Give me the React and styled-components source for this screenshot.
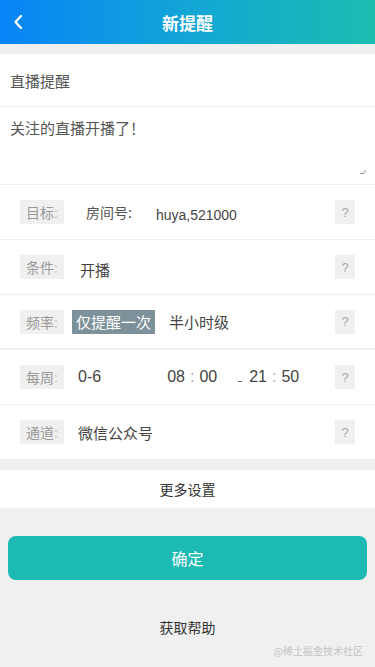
import React from "react";
import styled, { createGlobalStyle } from "styled-components";

const GlobalStyle = createGlobalStyle`
  html, body {
    margin: 0;
    padding: 0;
    background: #f0f0f0;
    font-family: "Noto Sans CJK SC", "Liberation Sans", Arial, sans-serif;
  }
`;

const Page = styled.div`
  width: 375px;
  min-height: 667px;
  background: #f0f0f0;
  position: relative;
`;

const Header = styled.div`
  height: 44px;
  display: flex;
  align-items: center;
  justify-content: center;
  position: relative;
  background: linear-gradient(90deg, #0784f7 0%, #13a6d6 50%, #1cbcb0 100%);
  color: #fff;
`;

const Back = styled.div`
  position: absolute;
  left: 12px;
  top: 13px;
  width: 14px;
  height: 18px;
  display: flex;
`;

const Title = styled.h1`
  margin: 0;
  font-size: 17px;
  font-weight: bold;
`;

const Section = styled.div`
  background: #fff;
  margin-top: ${(p) => p.$gap || 0}px;
`;

const NameRow = styled.div`
  height: 52px;
  display: flex;
  align-items: center;
  padding: 0 10px;
  font-size: 15px;
  color: #555;
  border-bottom: 1px solid #eee;
`;

const TextArea = styled.div`
  height: 78px;
  padding: 10px;
  box-sizing: border-box;
  font-size: 15px;
  color: #555;
  position: relative;
  border-bottom: 1px solid #eee;
`;

const Resize = styled.span`
  position: absolute;
  right: 10px;
  bottom: 10px;
  width: 3px;
  height: 3px;
  border-right: 1px solid #999;
  border-bottom: 1px solid #999;
  transform: skewX(-30deg);
`;

const Row = styled.div`
  height: ${(p) => (p.$thick ? 53 : 54)}px;
  display: flex;
  align-items: center;
  padding: 0 20px;
  border-bottom: ${(p) => (p.$thick ? 2 : 1)}px solid #eee;
  font-size: 15px;
  color: #444;
  &:last-child {
    border-bottom: none;
  }
`;

const Label = styled.span`
  width: 44px;
  height: 24px;
  background: #f0f0f0;
  color: #999;
  font-size: 14px;
  display: flex;
  align-items: center;
  justify-content: center;
  flex-shrink: 0;
  span {
    color: #ccc;
  }
`;

const Value = styled.span`
  margin-left: ${(p) => p.$ml || 0}px;
  margin-top: ${(p) => p.$mt || 0}px;
  font-size: ${(p) => p.$size || 15}px;
  color: ${(p) => p.$color || "#444"};
  white-space: nowrap;
`;

const Latin = styled(Value)`
  font-family: "Liberation Sans", Arial, sans-serif;
`;

const Chip = styled.span`
  margin-left: 8px;
  height: 24px;
  padding: 0 4px;
  display: flex;
  align-items: center;
  background: #7d919b;
  color: #fff;
  font-size: 15px;
`;

const Help = styled.span`
  margin-left: auto;
  width: 20px;
  height: 24px;
  background: #f0f0f0;
  color: #aaa;
  font-size: 13px;
  display: flex;
  align-items: center;
  justify-content: center;
  font-family: "Liberation Sans", Arial, sans-serif;
`;

const Time = styled.span`
  color: #444;
  font-size: 16px;
  font-family: "Liberation Sans", Arial, sans-serif;
  white-space: nowrap;
  margin-left: ${(p) => p.$ml || 0}px;
  display: flex;
  align-items: baseline;
  i {
    font-style: normal;
    color: #aaa;
    margin: 0 5px;
  }
`;

const Dash = styled.span`
  display: inline-block;
  width: 4px;
  height: 1px;
  background: #666;
  margin-right: 7px;
`;

const MoreRow = styled.div`
  height: 38px;
  display: flex;
  align-items: center;
  justify-content: center;
  font-size: 14px;
  color: #333;
`;

const Confirm = styled.button`
  display: block;
  margin: 28px 8px 0;
  width: 359px;
  height: 44px;
  border: none;
  border-radius: 8px;
  background: #1db9b3;
  color: #fff;
  font-size: 16px;
  font-family: inherit;
`;

const HelpLink = styled.div`
  margin-top: 37px;
  text-align: center;
  font-size: 14px;
  color: #333;
`;

const Watermark = styled.div`
  position: absolute;
  right: 12px;
  bottom: 9px;
  font-size: 10px;
  color: #c4c4c4;
`;

const Colon = () => <span>:</span>;

export default function App() {
  return (
    <Page>
      <GlobalStyle />
      <Header>
        <Back>
          <svg width="14" height="18" viewBox="0 0 14 18" fill="none">
            <path d="M9 3 L3.5 9 L9 15" stroke="#fff" strokeWidth="2.2" strokeLinecap="round" strokeLinejoin="round" />
          </svg>
        </Back>
        <Title>新提醒</Title>
      </Header>

      <Section $gap={10}>
        <NameRow>直播提醒</NameRow>
        <TextArea>
          关注的直播开播了！
          <Resize />
        </TextArea>
        <Row>
          <Label>目标<Colon /></Label>
          <Value $ml={22} $size={14} $color="#555">房间号:</Value>
          <Latin $ml={24} $mt={5} $size={14} $color="#444">huya,521000</Latin>
          <Help>?</Help>
        </Row>
        <Row>
          <Label>条件<Colon /></Label>
          <Value $ml={16} $mt={4}>开播</Value>
          <Help>?</Help>
        </Row>
        <Row $thick>
          <Label>频率<Colon /></Label>
          <Chip>仅提醒一次</Chip>
          <Value $ml={14}>半小时级</Value>
          <Help>?</Help>
        </Row>
        <Row>
          <Label>每周<Colon /></Label>
          <Time $ml={14}>0-6</Time>
          <Time $ml={66}>08<i>:</i>00</Time>
          <Time $ml={21}><Dash />21<i>:</i>50</Time>
          <Help>?</Help>
        </Row>
        <Row>
          <Label>通道<Colon /></Label>
          <Value $ml={14}>微信公众号</Value>
          <Help>?</Help>
        </Row>
      </Section>

      <Section $gap={11}>
        <MoreRow>更多设置</MoreRow>
      </Section>

      <Confirm>确定</Confirm>
      <HelpLink>获取帮助</HelpLink>
      <Watermark>@稀土掘金技术社区</Watermark>
    </Page>
  );
}
